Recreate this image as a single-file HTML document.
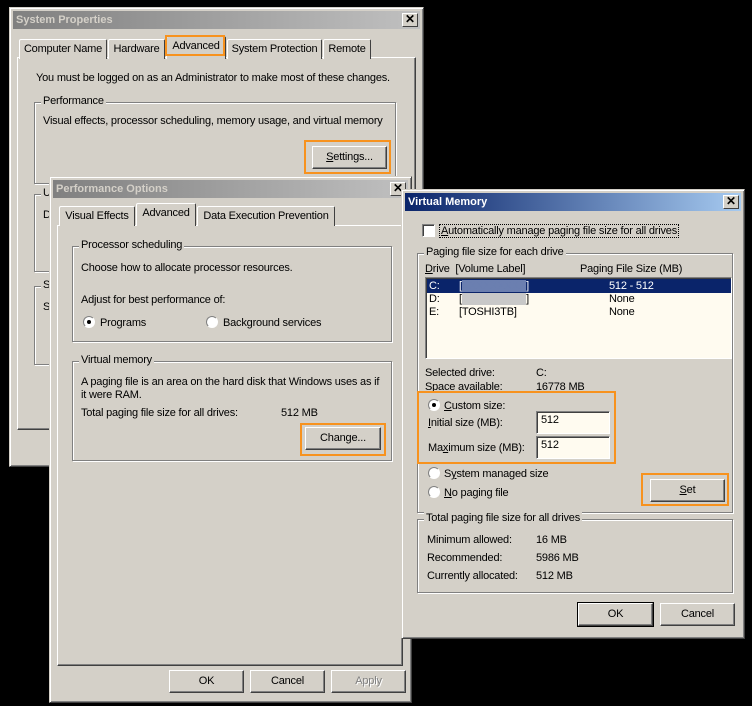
<!DOCTYPE html>
<html><head><style>
*{box-sizing:border-box;margin:0;padding:0}
body{width:752px;height:706px;background:#000;position:relative;overflow:hidden;font-family:"Liberation Sans",Tahoma,sans-serif;font-size:11px;letter-spacing:-0.2px;color:#000}
.a{position:absolute}
.win{position:absolute;background:#d4d0c8;border:1px solid;border-color:#d4d0c8 #404040 #404040 #d4d0c8;box-shadow:inset 1px 1px 0 #fff,inset -1px -1px 0 #808080}
.title{position:absolute;left:3px;right:3px;top:3px;height:18px;color:#d4d0c8;font-weight:bold;font-size:11px;letter-spacing:0;line-height:18px;padding-left:3px;background:linear-gradient(90deg,#808080,#c0c0c0)}
.title.act{background:linear-gradient(90deg,#0a246a,#a6caf0);color:#fff}
.x{position:absolute;right:2px;top:2px;width:16px;height:14px;background:#d4d0c8;border:1px solid;border-color:#fff #404040 #404040 #fff;color:#000;font-size:12px;line-height:11px;text-align:center;font-weight:bold}
.panel{position:absolute;border:1px solid;border-color:#fff #404040 #404040 #fff;box-shadow:inset -1px -1px 0 #808080}
.tab{position:absolute;height:20px;border:1px solid;border-bottom:none;border-color:#fff #404040 #404040 #fff;border-radius:2px 2px 0 0;padding:0;text-align:center;line-height:18px;background:#d4d0c8;white-space:nowrap}
.grp{position:absolute;border:1px solid #808080;box-shadow:1px 1px 0 #fff,inset 1px 1px 0 #fff}
.gl{position:absolute;top:-8px;left:6px;background:#d4d0c8;padding:0 2px;white-space:nowrap}
.btn{position:absolute;height:23px;border:1px solid;border-color:#fff #404040 #404040 #fff;box-shadow:inset -1px -1px 0 #808080;text-align:center;line-height:21px;background:#d4d0c8}
.or{position:absolute;border:2px solid #f7921e}
.rad{position:absolute;width:12px;height:12px;border-radius:50%;background:#fff;border:1px solid;border-color:#808080 #fff #fff #808080}
.rad.on::after{content:"";position:absolute;left:3px;top:3px;width:4px;height:4px;border-radius:50%;background:#000}
.inp{position:absolute;background:#fffbf0;border:1px solid;border-color:#808080 #fff #fff #808080;box-shadow:inset 1px 1px 0 #404040;padding:2px 4px}
u{text-decoration:underline}
</style></head><body>

<!-- System Properties -->
<div class="win" style="left:9px;top:7px;width:415px;height:460px">
<div class="title">System Properties<div class="x">✕</div></div>
<div class="panel" style="left:7px;top:49px;width:399px;height:373px"></div>
<div class="tab" style="left:9px;top:31px;width:88px">Computer Name</div>
<div class="tab" style="left:98px;top:31px;width:57px">Hardware</div>
<div class="tab" style="left:156px;top:28px;width:60px;height:23px;z-index:2">Advanced</div>
<div class="tab" style="left:217px;top:31px;width:95px">System Protection</div>
<div class="tab" style="left:313px;top:31px;width:48px">Remote</div>
<div class="or" style="left:155px;top:27px;width:60px;height:21px;z-index:3"></div>
<div class="a" style="left:26px;top:64px;white-space:nowrap">You must be logged on as an Administrator to make most of these changes.</div>
<div class="grp" style="left:24px;top:94px;width:362px;height:82px"><span class="gl">Performance</span>
<div class="a" style="left:8px;top:12px;white-space:nowrap">Visual effects, processor scheduling, memory usage, and virtual memory</div></div>
<div class="btn" style="left:302px;top:138px;width:75px"><u>S</u>ettings...</div>
<div class="or" style="left:294px;top:132px;width:87px;height:34px"></div>
<div class="grp" style="left:24px;top:186px;width:362px;height:78px"><span class="gl">U</span><div class="a" style="left:8px;top:14px">D</div></div>
<div class="grp" style="left:24px;top:278px;width:362px;height:79px"><span class="gl">S</span><div class="a" style="left:8px;top:14px">S</div></div>
</div>

<!-- Performance Options -->
<div class="win" style="left:49px;top:176px;width:363px;height:527px">
<div class="title">Performance Options<div class="x">✕</div></div>
<div class="panel" style="left:7px;top:48px;width:346px;height:441px"></div>
<div class="tab" style="left:9px;top:29px;width:76px">Visual Effects</div>
<div class="tab" style="left:86px;top:26px;width:60px;height:23px;z-index:2">Advanced</div>
<div class="tab" style="left:147px;top:29px;width:138px">Data Execution Prevention</div>
<div class="grp" style="left:22px;top:69px;width:320px;height:96px"><span class="gl">Processor scheduling</span>
<div class="a" style="left:8px;top:15px;white-space:nowrap">Choose how to allocate processor resources.</div>
<div class="a" style="left:8px;top:47px;white-space:nowrap">Adjust for best performance of:</div>
<div class="rad on" style="left:10px;top:69px"></div><div class="a" style="left:27px;top:70px">Programs</div>
<div class="rad" style="left:133px;top:69px"></div><div class="a" style="left:150px;top:70px;white-space:nowrap">Background services</div>
</div>
<div class="grp" style="left:22px;top:184px;width:320px;height:100px"><span class="gl">Virtual memory</span>
<div class="a" style="left:8px;top:14px;width:305px;line-height:13px">A paging file is an area on the hard disk that Windows uses as if it were RAM.</div>
<div class="a" style="left:8px;top:45px;white-space:nowrap">Total paging file size for all drives:</div>
<div class="a" style="left:208px;top:45px;white-space:nowrap">512 MB</div>
</div>
<div class="btn" style="left:255px;top:250px;width:76px">Change...</div>
<div class="or" style="left:250px;top:246px;width:86px;height:33px"></div>
<div class="btn" style="left:119px;top:493px;width:75px">OK</div>
<div class="btn" style="left:200px;top:493px;width:75px">Cancel</div>
<div class="btn" style="left:281px;top:493px;width:75px;color:#808080;text-shadow:1px 1px 0 #fff">Apply</div>
</div>

<!-- Virtual Memory -->
<div class="win" style="left:401px;top:189px;width:344px;height:450px">
<div class="title act">Virtual Memory<div class="x">✕</div></div>
<div class="a" style="left:20px;top:34px;width:13px;height:13px;background:#fff;border:1px solid;border-color:#808080 #fff #fff #808080;box-shadow:inset 1px 1px 0 #404040"></div>
<div class="a" style="left:37px;top:34px;border:1px dotted #000;padding:0 1px;white-space:nowrap"><u>A</u>utomatically manage paging file size for all drives</div>
<div class="grp" style="left:15px;top:63px;width:316px;height:260px"><span class="gl">Paging file size for each drive</span>
<div class="a" style="left:7px;top:9px;white-space:nowrap"><u>D</u>rive &nbsp;[Volume Label]</div>
<div class="a" style="left:162px;top:9px;white-space:nowrap">Paging File Size (MB)</div>
<div class="a" style="left:7px;top:23px;width:307px;height:82px;background:#fffbf0;border:1px solid;border-color:#808080 #fff #fff #808080;box-shadow:inset 1px 1px 0 #404040">
<div class="a" style="left:1px;top:1px;width:304px;height:14px;background:#0a246a"></div>
<div class="a" style="left:3px;top:2px;color:#fff">C:</div><div class="a" style="left:33px;top:2px;color:#fff">[<span style="background:#6b7fb0;color:#6b7fb0">XXXXXXXXX</span>]</div><div class="a" style="left:183px;top:2px;color:#fff">512 - 512</div>
<div class="a" style="left:3px;top:15px">D:</div><div class="a" style="left:33px;top:15px">[<span style="background:#c8c8c8;color:#c8c8c8">XXXXXXXXX</span>]</div><div class="a" style="left:183px;top:15px">None</div>
<div class="a" style="left:3px;top:28px">E:</div><div class="a" style="left:33px;top:28px">[TOSHI3TB]</div><div class="a" style="left:183px;top:28px">None</div>
</div>
<div class="a" style="left:7px;top:113px;white-space:nowrap">Selected drive:</div><div class="a" style="left:118px;top:113px">C:</div>
<div class="a" style="left:7px;top:127px;white-space:nowrap">Space available:</div><div class="a" style="left:118px;top:127px;white-space:nowrap">16778 MB</div>
<div class="rad on" style="left:10px;top:145px"></div><div class="a" style="left:26px;top:146px;white-space:nowrap"><u>C</u>ustom size:</div>
<div class="a" style="left:10px;top:163px;white-space:nowrap"><u>I</u>nitial size (MB):</div>
<div class="inp" style="left:118px;top:157px;width:74px;height:23px">512</div>
<div class="a" style="left:10px;top:188px;white-space:nowrap">Ma<u>x</u>imum size (MB):</div>
<div class="inp" style="left:118px;top:182px;width:74px;height:23px">512</div>
<div class="rad" style="left:10px;top:213px"></div><div class="a" style="left:26px;top:214px;white-space:nowrap">S<u>y</u>stem managed size</div>
<div class="rad" style="left:10px;top:232px"></div><div class="a" style="left:26px;top:233px;white-space:nowrap"><u>N</u>o paging file</div>
</div>
<div class="or" style="left:15px;top:201px;width:199px;height:73px"></div>
<div class="btn" style="left:248px;top:289px;width:75px"><u>S</u>et</div>
<div class="or" style="left:239px;top:283px;width:88px;height:33px"></div>
<div class="grp" style="left:15px;top:329px;width:316px;height:74px"><span class="gl">Total paging file size for all drives</span>
<div class="a" style="left:9px;top:14px;white-space:nowrap">Minimum allowed:</div><div class="a" style="left:118px;top:14px;white-space:nowrap">16 MB</div>
<div class="a" style="left:9px;top:32px;white-space:nowrap">Recommended:</div><div class="a" style="left:118px;top:32px;white-space:nowrap">5986 MB</div>
<div class="a" style="left:9px;top:50px;white-space:nowrap">Currently allocated:</div><div class="a" style="left:118px;top:50px;white-space:nowrap">512 MB</div>
</div>
<div class="btn" style="left:176px;top:413px;width:75px;outline:1px solid #000">OK</div>
<div class="btn" style="left:258px;top:413px;width:75px">Cancel</div>
</div>
</body></html>
